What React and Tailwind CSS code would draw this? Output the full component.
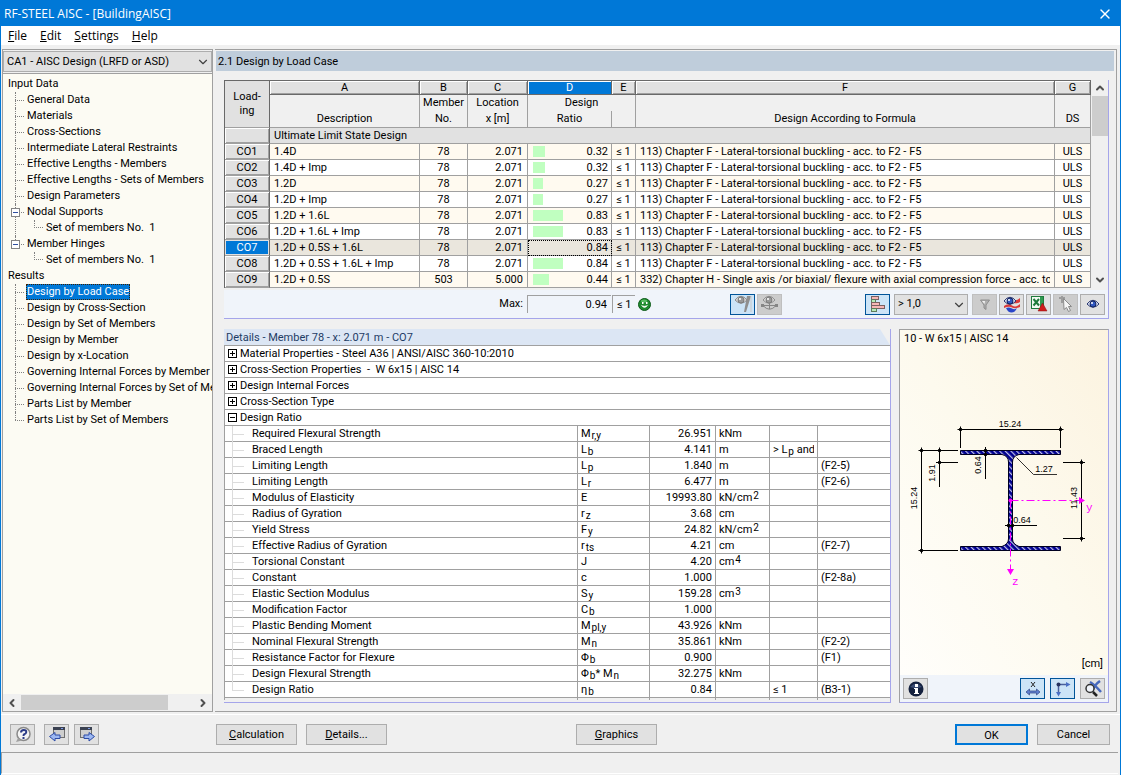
import React from 'react';
import { ChevronDown, ChevronLeft, ChevronRight, ChevronUp, X } from 'lucide-react';

const menu = ['File', 'Edit', 'Settings', 'Help'];

const inputData = [
  { label: 'General Data' },
  { label: 'Materials' },
  { label: 'Cross-Sections' },
  { label: 'Intermediate Lateral Restraints' },
  { label: 'Effective Lengths - Members' },
  { label: 'Effective Lengths - Sets of Members' },
  { label: 'Design Parameters' },
  { label: 'Nodal Supports', child: 'Set of members No.  1' },
  { label: 'Member Hinges', child: 'Set of members No.  1' },
];

const results = [
  { label: 'Design by Load Case', active: true },
  { label: 'Design by Cross-Section' },
  { label: 'Design by Set of Members' },
  { label: 'Design by Member' },
  { label: 'Design by x-Location' },
  { label: 'Governing Internal Forces by Member' },
  { label: 'Governing Internal Forces by Set of Members' },
  { label: 'Parts List by Member' },
  { label: 'Parts List by Set of Members' },
];

const torsional = '113) Chapter F - Lateral-torsional buckling - acc. to F2 - F5';
const flexure = '332) Chapter H - Single axis /or biaxial/ flexure with axial compression force - acc. to H1';

const loadCases = [
  { id: 'CO1', description: '1.4D', member: '78', x: '2.071', ratio: '0.32', formula: torsional },
  { id: 'CO2', description: '1.4D + Imp', member: '78', x: '2.071', ratio: '0.32', formula: torsional },
  { id: 'CO3', description: '1.2D', member: '78', x: '2.071', ratio: '0.27', formula: torsional },
  { id: 'CO4', description: '1.2D + Imp', member: '78', x: '2.071', ratio: '0.27', formula: torsional },
  { id: 'CO5', description: '1.2D + 1.6L', member: '78', x: '2.071', ratio: '0.83', formula: torsional },
  { id: 'CO6', description: '1.2D + 1.6L + Imp', member: '78', x: '2.071', ratio: '0.83', formula: torsional },
  { id: 'CO7', description: '1.2D + 0.5S + 1.6L', member: '78', x: '2.071', ratio: '0.84', formula: torsional, selected: true },
  { id: 'CO8', description: '1.2D + 0.5S + 1.6L + Imp', member: '78', x: '2.071', ratio: '0.84', formula: torsional },
  { id: 'CO9', description: '1.2D + 0.5S', member: '503', x: '5.000', ratio: '0.44', formula: flexure },
];

const groups = [
  'Material Properties - Steel A36 | ANSI/AISC 360-10:2010',
  'Cross-Section Properties  -  W 6x15 | AISC 14',
  'Design Internal Forces',
  'Cross-Section Type',
];

const Sub = ({ children }) => <span className="relative top-[2px] pl-px text-[10px]">{children}</span>;
const Sup = ({ children }) => <span className="relative -top-[2px] pl-px text-[10px]">{children}</span>;

const details = [
  { name: 'Required Flexural Strength', symbol: <>M<Sub>r,y</Sub></>, value: '26.951', unit: 'kNm' },
  { name: 'Braced Length', symbol: <>L<Sub>b</Sub></>, value: '4.141', unit: 'm', note: <>&gt; L<Sub>p</Sub> and</> },
  { name: 'Limiting Length', symbol: <>L<Sub>p</Sub></>, value: '1.840', unit: 'm', ref: '(F2-5)' },
  { name: 'Limiting Length', symbol: <>L<Sub>r</Sub></>, value: '6.477', unit: 'm', ref: '(F2-6)' },
  { name: 'Modulus of Elasticity', symbol: 'E', value: '19993.80', unit: <>kN/cm<Sup>2</Sup></> },
  { name: 'Radius of Gyration', symbol: <>r<Sub>z</Sub></>, value: '3.68', unit: 'cm' },
  { name: 'Yield Stress', symbol: <>F<Sub>y</Sub></>, value: '24.82', unit: <>kN/cm<Sup>2</Sup></> },
  { name: 'Effective Radius of Gyration', symbol: <>r<Sub>ts</Sub></>, value: '4.21', unit: 'cm', ref: '(F2-7)' },
  { name: 'Torsional Constant', symbol: 'J', value: '4.20', unit: <>cm<Sup>4</Sup></> },
  { name: 'Constant', symbol: 'c', value: '1.000', ref: '(F2-8a)' },
  { name: 'Elastic Section Modulus', symbol: <>S<Sub>y</Sub></>, value: '159.28', unit: <>cm<Sup>3</Sup></> },
  { name: 'Modification Factor', symbol: <>C<Sub>b</Sub></>, value: '1.000' },
  { name: 'Plastic Bending Moment', symbol: <>M<Sub>pl,y</Sub></>, value: '43.926', unit: 'kNm' },
  { name: 'Nominal Flexural Strength', symbol: <>M<Sub>n</Sub></>, value: '35.861', unit: 'kNm', ref: '(F2-2)' },
  { name: 'Resistance Factor for Flexure', symbol: <>Φ<Sub>b</Sub></>, value: '0.900', ref: '(F1)' },
  { name: 'Design Flexural Strength', symbol: <>Φ<Sub>b</Sub>* M<Sub>n</Sub></>, value: '32.275', unit: 'kNm' },
  { name: 'Design Ratio', symbol: <>η<Sub>b</Sub></>, value: '0.84', note: '≤ 1', ref: '(B3-1)' },
];

/* ---------- Icons ---------- */

const Icon = ({ children }) => (
  <svg width="18" height="18" viewBox="0 0 18 18" aria-hidden="true">{children}</svg>
);

const EyeShape = ({ x, y, gray }) => (
  <g transform={`translate(${x} ${y})`}>
    <path d="M0 4 Q6 -3.500 12 4 Q6 10.500 0 4Z" fill={gray ? '#dcdcdc' : '#e6ecfa'} stroke={gray ? '#8c8c8c' : '#26336e'} />
    <circle cx="6" cy="4" r="3" fill={gray ? '#9a9a9a' : '#3057c0'} stroke={gray ? '#7c7c7c' : '#152560'} />
    <circle cx="5" cy="3" r="1" fill="#fff" />
  </g>
);

const HelpIcon = () => (
  <Icon>
    <circle cx="9.500" cy="8" r="6.500" fill="#f4f4f4" stroke="#8a8a8a" strokeWidth="1.500" />
    <path d="M4 12 L2 16 L8 14.500Z" fill="#a0a0a0" />
    <path d="M7 6.500 Q7 4 9.800 4 Q12.500 4 12.200 6.300 Q12 7.600 10.300 8.200 Q9.500 8.600 9.500 10" fill="none" stroke="#2c3c88" strokeWidth="2" />
    <rect x="8.500" y="11" width="2" height="2" fill="#2c3c88" />
  </Icon>
);

const WindowArrowIcon = ({ next }) => (
  <Icon>
    <rect x={next ? 2.5 : 5.5} y="1.500" width="11" height="10" fill="#cfcfcf" stroke="#707070" />
    <rect x={next ? 2 : 5} y="1" width="12" height="3" fill="#3b4252" />
    <rect x={next ? 10 : 13} y="2" width="2" height="1" fill="#7f9be8" />
    {next
      ? <path d="M6 9H11V6.500L16.500 10.500L11 15V12.500H6Z" fill="#9db8f2" stroke="#2c4ba6" />
      : <path d="M12 9H7V6.500L1.500 10.500L7 15V12.500H12Z" fill="#9db8f2" stroke="#2c4ba6" />}
  </Icon>
);

const MemberEyeIcon = () => (
  <Icon>
    <EyeShape x={1} y={1} gray />
    <path d="M13 1H17L12 17H10Z" fill="#8f8f8f" />
    <path d="M17 1V17" stroke="#c8c8c8" />
  </Icon>
);

const SupportEyeIcon = () => (
  <Icon>
    <EyeShape x={2} y={1} gray />
    <path d="M1 10.500H16M2 10.500Q8.500 18 15 10.500M8.500 8V14" fill="none" stroke="#858585" />
    <rect x="0" y="9" width="3" height="3" fill="#858585" />
    <rect x="14" y="9" width="3" height="3" fill="#858585" />
  </Icon>
);

const BarsIcon = () => (
  <Icon>
    <path d="M2.500 1V17" stroke="#777" />
    <rect x="2.500" y="1.500" width="7" height="3" fill="#f6b5b5" stroke="#7a6060" />
    <rect x="2.500" y="4.500" width="4" height="3" fill="#b7eab7" stroke="#5d7a5d" />
    <rect x="2.500" y="7.500" width="8" height="3" fill="#f6b5b5" stroke="#7a6060" />
    <rect x="2.500" y="10.500" width="13" height="3" fill="#f6b5b5" stroke="#7a6060" />
    <rect x="2.500" y="13.500" width="5" height="3" fill="#b7eab7" stroke="#5d7a5d" />
  </Icon>
);

const FilterIcon = () => (
  <Icon>
    <path d="M4.500 5H13.500L10 10V14.500L8 13V10Z" fill="#b0b0b0" stroke="#8e8e8e" />
    <path d="M6 6H9L8.500 9Z" fill="#f2f2f2" />
  </Icon>
);

const ColorEyeIcon = () => (
  <Icon>
    <path d="M11 5Q14 6 17 3V7Q14 9 10 8Z" fill="#d83a3a" />
    <path d="M1 11Q5 8 9 10.500T17 9V12Q12 14 9 12.500T1 13Z" fill="#d83a3a" />
    <path d="M3 13Q6 12 9 13.500T14 13Q12 17.500 8.500 17.500T3 13Z" fill="#2a46c8" />
    <EyeShape x={1} y={2} />
  </Icon>
);

const ExcelIcon = () => (
  <Icon>
    <rect x="1.500" y="1.500" width="12" height="12" fill="#f3faf3" stroke="#1f7a3c" />
    <rect x="10" y="2" width="3" height="11" fill="#2f9a50" />
    <path d="M3.500 4L9 10.500M9 4L3.500 10.500" stroke="#1f7a3c" strokeWidth="2" />
    <path d="M12.500 8L17 16H8Z" fill="#d01c1c" stroke="#8a1010" strokeWidth=".5" />
  </Icon>
);

const PickIcon = () => (
  <Icon>
    <path d="M2 3H8M5 1V8" stroke="#9c9c9c" strokeWidth="2" />
    <path d="M6.500 3.500L14.500 11.500H11.500L13.500 15.500L11.500 16.500L9.500 12.500L7 14.500Z" fill="#f6f6f6" stroke="#8a8a8a" />
  </Icon>
);

const EyeIcon = () => <Icon><EyeShape x={3} y={5} /></Icon>;

const InfoIcon = () => (
  <Icon>
    <circle cx="9" cy="9" r="7.500" fill="#14213f" />
    <path d="M3 7Q9 0 15 7Q9 9 3 7Z" fill="#536796" opacity=".6" />
    <rect x="8" y="4" width="3" height="3" fill="#fff" />
    <path d="M7 8H11V13H12V14H7V13H8V9H7Z" fill="#fff" />
  </Icon>
);

const DimensionIcon = () => (
  <Icon>
    <path d="M7 2L11 7M11 2L7 7" stroke="#222" />
    <path d="M2 12L5.500 9V11H12.500V9L16 12L12.500 15V13H5.500V15Z" fill="#5d7fd0" stroke="#3c528e" strokeWidth=".8" />
  </Icon>
);

const AxesIcon = () => (
  <Icon>
    <path d="M4.500 14V4.500H13" fill="none" stroke="#4a5f9c" strokeWidth="1.500" />
    <path d="M12 2L16.500 4.500L12 7ZM2 12L4.500 16.500L7 12Z" fill="#4a6fc4" />
    <circle cx="4.500" cy="4.500" r="2" fill="#26335f" />
  </Icon>
);

const ZoomIcon = () => (
  <Icon>
    <path d="M6 2Q10 4 17 12M16 1Q10 5 8 12" fill="none" stroke="#4668bd" strokeWidth="2.500" />
    <circle cx="6" cy="8.500" r="4" fill="#f0f4fa" stroke="#333" strokeWidth="1.500" />
    <path d="M9 12L13 16" stroke="#222" strokeWidth="2.500" />
  </Icon>
);

const Smiley = () => (
  <svg width="13" height="13" viewBox="0 0 13 13" role="img" aria-label="Passed">
    <circle cx="6.500" cy="6.500" r="6" fill="#1f8a2f" stroke="#0d5a18" />
    <ellipse cx="6" cy="3" rx="3" ry="1.500" fill="#7fdc84" opacity=".6" />
    <rect x="4" y="4" width="1.500" height="2" fill="#fff" />
    <rect x="8" y="4" width="1.500" height="2" fill="#fff" />
    <path d="M3.500 7.500Q6.500 11.500 9.500 7.500Q6.500 9 3.500 7.500Z" fill="#fff" stroke="#fff" strokeWidth=".5" />
  </svg>
);

/* ---------- Controls ---------- */

const tones = {
  normal: 'border-[#adadad] bg-[#e1e1e1]',
  active: 'border-[#005499] bg-[#cce4f7]',
  disabled: 'border-[#bfbfbf] bg-[#cccccc]',
};

const IconButton = ({ label, tone = 'normal', children }) => (
  <button
    type="button"
    aria-label={label}
    disabled={tone === 'disabled'}
    className={`flex h-[21px] w-[25px] shrink-0 items-center justify-center border ${tones[tone]}`}
  >
    {children}
  </button>
);

const TextButton = ({ children, className = 'w-[81px] border border-[#adadad]' }) => (
  <button type="button" className={`h-[21px] bg-[#e1e1e1] text-center leading-[19px] ${className}`}>
    {children}
  </button>
);

const Select = ({ label, value, className }) => (
  <div className={`relative h-[21px] ${className}`}>
    <select aria-label={label} className="h-full w-full appearance-none border border-[#adadad] bg-[#e1e1e1] px-[3px] pt-px">
      <option>{value}</option>
    </select>
    <ChevronDown className="pointer-events-none absolute right-[2px] top-1 h-[14px] w-[14px] text-[#404040]" strokeWidth={2} />
  </div>
);

/* ---------- Navigator ---------- */

const TreeItem = ({ item, last }) => (
  <li className="relative pl-[19px]">
    <span className={`absolute left-[8px] top-0 border-l border-dotted border-[#808080] ${last ? 'h-2' : 'h-full'}`} />
    <span className="absolute left-[8px] top-2 w-[9px] border-t border-dotted border-[#808080]" />
    {item.child && (
      <span className="absolute left-1 top-1 flex h-[9px] w-[9px] items-center justify-center border border-[#848484] bg-white">
        <span className="h-px w-[5px] bg-[#3050a0]" />
      </span>
    )}
    <a href="#" className={`inline-block h-4 px-px leading-4 ${item.active ? 'bg-[#0078d7] text-white outline-1 -outline-offset-1 outline-dotted outline-[#402000]' : ''}`}>
      {item.label}
    </a>
    {item.child && (
      <ul>
        <li className="relative h-4 pl-[19px]">
          <span className="absolute left-[8px] top-0 h-2 w-[9px] border-b border-l border-dotted border-[#808080]" />
          <a href="#" className="whitespace-pre px-px">{item.child}</a>
        </li>
      </ul>
    )}
  </li>
);

const TreeSection = ({ title, items }) => (
  <div>
    <div className="pl-[5px]">{title}</div>
    <ul className="pl-1">
      {items.map((item, i) => (
        <TreeItem key={item.label} item={item} last={i === items.length - 1} />
      ))}
    </ul>
  </div>
);

const Navigator = () => (
  <nav className="flex w-[211px] shrink-0 flex-col border border-[#a0a0a0] bg-[#fcfbf3]">
    <div className="border-b border-[#a0a0a0] bg-[#f0f0f0] pb-px pt-px">
      <Select label="Design case" value="CA1 - AISC Design (LRFD or ASD)" className="w-full" />
    </div>
    <div className="flex-1 overflow-hidden whitespace-nowrap pt-[2px] leading-4">
      <TreeSection title="Input Data" items={inputData} />
      <TreeSection title="Results" items={results} />
    </div>
    <div className="flex h-[17px] items-center bg-[#f0f0f0] text-[#505050]">
      <button type="button" aria-label="Scroll left" className="px-[3px]"><ChevronLeft className="h-3 w-3" strokeWidth={4} /></button>
      <div className="flex h-[15px] flex-1">
        <div className="w-[85%] bg-[#cdcdcd]" />
      </div>
      <button type="button" aria-label="Scroll right" className="px-[3px]"><ChevronRight className="h-3 w-3" strokeWidth={4} /></button>
    </div>
  </nav>
);

/* ---------- Load case grid ---------- */

const letterCell = 'h-[15px] border-y border-r border-[#696969] bg-[#e1e1e1] p-0 leading-[13px] shadow-[inset_1px_1px_0_#fff,inset_-1px_-1px_0_#a0a0a0]';
const headCell = 'border-b border-r border-[#a0a0a0] bg-[#f0f0f0] p-0';
const bodyCell = 'h-4 overflow-hidden whitespace-nowrap border-b border-r border-[#a0a0a0] py-0 leading-[15px]';
const rowHead = 'h-4 border-b border-r border-b-[#a0a0a0] border-r-[#696969] p-0 leading-[13px]';
const raised = 'bg-[#e1e1e1] shadow-[inset_1px_1px_0_#fff,inset_-1px_-1px_0_#a0a0a0]';

const LoadCaseTable = () => (
  <table className="w-full table-fixed border-separate border-spacing-0 border-l border-[#696969]">
    <colgroup>
      <col className="w-[45px]" />
      <col className="w-[150px]" />
      <col className="w-[48px]" />
      <col className="w-[60px]" />
      <col className="w-[84px]" />
      <col className="w-[24px]" />
      <col />
      <col className="w-[36px]" />
    </colgroup>
    <thead className="[&_th]:font-normal">
      <tr>
        <th rowSpan={3} className="border-y border-r border-[#696969] border-b-[#a0a0a0] bg-[#e1e1e1] p-0 leading-[14px]">Load-<br />ing</th>
        <th className={letterCell}>A</th>
        <th className={letterCell}>B</th>
        <th className={letterCell}>C</th>
        <th className="h-[15px] border-y border-r border-[#696969] bg-[#0078d7] p-0 leading-[13px] text-white shadow-[inset_1px_1px_0_#fff]">D</th>
        <th className={letterCell}>E</th>
        <th className={letterCell}>F</th>
        <th className={letterCell}>G</th>
      </tr>
      <tr className="h-4 leading-4">
        <th rowSpan={2} className={`${headCell} align-bottom`}>Description</th>
        <th rowSpan={2} className={`${headCell} align-bottom`}>Member<br />No.</th>
        <th rowSpan={2} className={`${headCell} align-bottom`}>Location<br />x [m]</th>
        <th colSpan={2} className="h-4 border-r border-[#a0a0a0] bg-[#f0f0f0] p-0">Design</th>
        <th rowSpan={2} className={`${headCell} align-bottom`}>Design According to Formula</th>
        <th rowSpan={2} className={`${headCell} align-bottom`}>DS</th>
      </tr>
      <tr className="leading-4">
        <th className={`${headCell} h-[17px]`}>Ratio</th>
        <th className={headCell} />
      </tr>
    </thead>
    <tbody>
      <tr>
        <th className={`${rowHead} ${raised}`} />
        <td colSpan={7} className={`${bodyCell} bg-[#e1e1e1] px-1`}>Ultimate Limit State Design</td>
      </tr>
      {loadCases.map((row, i) => (
        <tr key={row.id} className={row.selected ? 'bg-[#eae6dd]' : i % 2 ? 'bg-white' : 'bg-[#fffaf0]'}>
          <th className={`${rowHead} font-normal ${row.selected ? 'bg-[#0078d7] text-white shadow-[inset_0_0_0_1px_#e1e1e1]' : raised}`}>{row.id}</th>
          <td className={`${bodyCell} px-1`}>{row.description}</td>
          <td className={`${bodyCell} text-center`}>{row.member}</td>
          <td className={`${bodyCell} px-1 text-right`}>{row.x}</td>
          <td className={`${bodyCell} pl-[5px] pr-[3px] ${row.selected ? 'outline-1 -outline-offset-1 outline-dotted outline-black' : ''}`}>
            <div className="flex items-center justify-between">
              <span
                className={`h-[11px] ${row.selected ? '' : 'bg-[#c0ffc0]'}`}
                style={{ width: Math.round(row.ratio * 36) }}
              />
              {row.ratio}
            </div>
          </td>
          <td className={`${bodyCell} text-center`}>≤ 1</td>
          <td className={`${bodyCell} px-1`}>
            <div className="overflow-hidden">{row.formula}</div>
          </td>
          <td className={`${bodyCell} text-center`}>ULS</td>
        </tr>
      ))}
    </tbody>
  </table>
);

const GridToolbar = () => (
  <div className="mt-[2px] flex h-[28px] items-center bg-[#f0f4fa] pr-[3px]">
    <div className="flex w-[506px] items-center">
      <label htmlFor="max" className="w-[303px] pr-1 text-right">Max:</label>
      <input id="max" readOnly value="0.94" className="h-[18px] w-[84px] border-l border-t border-[#a0a0a0] bg-[#f0f4fa] px-1 text-right" />
      <span className="ml-px h-[18px] w-[23px] border-l border-t border-[#a0a0a0] pl-1 leading-[18px]">≤ 1</span>
      <span className="ml-[3px]"><Smiley /></span>
    </div>
    <div className="flex flex-1 gap-[2px]">
      <IconButton label="Show member" tone="active"><MemberEyeIcon /></IconButton>
      <IconButton label="Show support" tone="disabled"><SupportEyeIcon /></IconButton>
    </div>
    <div className="flex gap-[2px]">
      <IconButton label="Ratio bars" tone="active"><BarsIcon /></IconButton>
      <Select label="Ratio filter" value="> 1,0" className="mx-[2px] w-[74px]" />
      <IconButton label="Filter" tone="disabled"><FilterIcon /></IconButton>
      <IconButton label="Colour scale"><ColorEyeIcon /></IconButton>
      <IconButton label="Export to Excel"><ExcelIcon /></IconButton>
      <IconButton label="Pick" tone="disabled"><PickIcon /></IconButton>
      <IconButton label="View"><EyeIcon /></IconButton>
    </div>
  </div>
);

const LoadCasePanel = () => (
  <section className="border-b border-r border-[#a5a5ea]">
    <div className="flex">
      <div className="min-w-0 flex-1"><LoadCaseTable /></div>
      <div className="ml-px flex w-4 flex-col items-center text-[#505050]">
        <button type="button" aria-label="Scroll up" className="flex h-4 items-center"><ChevronUp className="h-3 w-3" strokeWidth={4} /></button>
        <div className="h-10 w-full bg-[#cdcdcd]" />
        <div className="flex-1" />
        <button type="button" aria-label="Scroll down" className="flex h-4 items-center"><ChevronDown className="h-3 w-3" strokeWidth={4} /></button>
      </div>
    </div>
    <GridToolbar />
  </section>
);

/* ---------- Details ---------- */

const Toggle = ({ open }) => (
  <svg width="9" height="9" viewBox="0 0 9 9" className="shrink-0" aria-hidden="true">
    <rect x=".5" y=".5" width="8" height="8" fill="#fff" stroke="#000" />
    <path d={open ? 'M2 4.500H7' : 'M2 4.500H7M4.500 2V7'} stroke="#000" />
  </svg>
);

const detailCell = 'h-4 whitespace-nowrap border-b border-r border-[#a0a0a0] px-[3px] py-0 leading-[15px]';
const lastCell = 'h-4 whitespace-nowrap border-b border-[#a0a0a0] px-[3px] py-0 leading-[15px]';

const GroupRow = ({ title, open }) => (
  <tr>
    <td colSpan={6} className={lastCell}>
      <div className="flex items-center gap-[3px]">
        <Toggle open={open} />
        <span className="whitespace-pre">{title}</span>
      </div>
    </td>
  </tr>
);

const DetailsPanel = () => (
  <section className="min-w-0 flex-1 border-b border-r border-[#a5a5ea]">
    <h2 className="h-4 bg-[#dce6f4] px-[2px] leading-[17px] text-[#1e3c64] [clip-path:polygon(0_0,calc(100%-10px)_0,100%_100%,0_100%)]">
      Details - Member 78 - x: 2.071 m - CO7
    </h2>
    <table className="w-full table-fixed border-separate border-spacing-0 border-l border-t border-[#a0a0a0] bg-white">
      <colgroup>
        <col />
        <col className="w-[72px]" />
        <col className="w-[66px]" />
        <col className="w-[54px]" />
        <col className="w-[48px]" />
        <col className="w-[72px]" />
      </colgroup>
      <tbody>
        {groups.map((title) => <GroupRow key={title} title={title} />)}
        <GroupRow title="Design Ratio" open />
        {details.map((row, i) => (
          <tr key={i}>
            <td className={`${detailCell} relative`}>
              <span className={`absolute left-[7px] top-0 border-l border-[#dcdcdc] ${i === details.length - 1 ? 'h-2' : 'h-4'}`} />
              <span className="absolute left-[7px] top-2 w-3 border-t border-[#dcdcdc]" />
              <span className="pl-6">{row.name}</span>
            </td>
            <td className={detailCell}>{row.symbol}</td>
            <td className={`${detailCell} text-right`}>{row.value}</td>
            <td className={detailCell}>{row.unit}</td>
            <td className={detailCell}><div className="h-[15px] overflow-hidden">{row.note}</div></td>
            <td className={lastCell}>{row.ref}</td>
          </tr>
        ))}
        <tr className="bg-[#f0f0f0]">
          <td className="h-[2px] border-r border-[#a0a0a0] p-0" />
          <td className="border-r border-[#a0a0a0] p-0" />
          <td className="border-r border-[#a0a0a0] p-0" />
          <td className="border-r border-[#a0a0a0] p-0" />
          <td className="border-r border-[#a0a0a0] p-0" />
          <td className="p-0" />
        </tr>
      </tbody>
    </table>
    <div className="h-[2px]" />
  </section>
);

/* ---------- Section drawing ---------- */

const Dot = ({ x, y }) => (
  <path d={`M${x - 3} ${y}H${x + 3}M${x} ${y - 3}V${y + 3}M${x - 1} ${y - 1}h2v2h-2z`} fill="#000" stroke="#000" />
);

const SectionDrawing = () => (
  <svg viewBox="900 409 208 180" className="w-full font-['Liberation_Sans',sans-serif] text-[9px]" role="img" aria-label="W 6x15 cross-section">
    <defs>
      <pattern id="hatch" width="4" height="4" patternUnits="userSpaceOnUse" patternTransform="rotate(-45)">
        <rect width="4" height="4" fill="#000090" />
        <rect width="1.200" height="4" fill="#c0c0e8" />
      </pattern>
    </defs>
    <path
      d="M960.500 449.500H1060.500V453.500H1019Q1012.500 455 1012.500 461V538Q1012.500 543 1019 545.500H1060.500V549.500H960.500V545.500H1002Q1008.500 543 1008.500 538V461Q1008.500 455 1002 453.500H960.500Z"
      fill="url(#hatch)"
      stroke="#000020"
    />
    <g stroke="#000" fill="none">
      <path d="M958 428.500H1063M960.500 427V447M1060.500 427V447" />
      <path d="M921.500 447V552M919 449.500H958M919 549.500H958" />
      <path d="M939.500 447V486M936 461.500H958" />
      <path d="M985.500 446V478" />
      <path d="M1016.500 456.500L1033.500 473.500H1057" strokeWidth=".8" />
      <path d="M1081.500 461V538M1063 461.500H1085M1063 537.500H1085" />
      <path d="M1005 524.500H1037" />
    </g>
    <Dot x={960.5} y={428.5} />
    <Dot x={1060.5} y={428.5} />
    <Dot x={921.5} y={449.5} />
    <Dot x={921.5} y={549.5} />
    <Dot x={939.5} y={449.5} />
    <Dot x={939.5} y={461.5} />
    <Dot x={985.5} y={449.5} />
    <Dot x={985.5} y={453.5} />
    <Dot x={1081.5} y={461.5} />
    <Dot x={1081.5} y={537.5} />
    <Dot x={1008.5} y={524.5} />
    <Dot x={1012.5} y={524.5} />
    <g stroke="#f0f" strokeDasharray="8 3 2 3">
      <path d="M1010.500 499.500H1079" />
      <path d="M1010.500 499.500V568" />
    </g>
    <circle cx="1010.500" cy="499.500" r="2" fill="#f0f" />
    <path d="M1079 496L1085 499.500L1079 503ZM1007 568H1014L1010.500 574Z" fill="#f0f" />
    <g textAnchor="middle">
      <text x="1010" y="426">15.24</text>
      <text x="1044" y="471">1.27</text>
      <text x="1022" y="522">0.64</text>
      <text transform="translate(917 497) rotate(-90)">15.24</text>
      <text transform="translate(935 472) rotate(-90)">1.91</text>
      <text transform="translate(981 464) rotate(-90)">0.64</text>
      <text transform="translate(1077 497) rotate(-90)">11.43</text>
    </g>
    <g fill="#f0f" className="font-['Liberation_Mono',monospace] text-[11px]">
      <text x="1086" y="510">y</text>
      <text x="1012" y="584">z</text>
    </g>
  </svg>
);

const SectionPanel = () => (
  <section className="flex w-[210px] shrink-0 flex-col border border-[#a5a5ea] border-l-[#a0a0a0] border-t-[#a0a0a0]">
    <div className="flex flex-1 flex-col bg-linear-to-bl from-[#fcf3e0] via-[#fdfaee] to-[#fffefb]">
      <h2 className="px-1 leading-[17px]">10 - W 6x15 | AISC 14</h2>
      <div className="flex flex-1 items-center"><SectionDrawing /></div>
      <div className="px-[5px] text-right leading-[22px]">[cm]</div>
    </div>
    <div className="flex h-[27px] items-center gap-[5px] bg-[#f0f4fa] px-[3px]">
      <IconButton label="Info"><InfoIcon /></IconButton>
      <span className="flex-1" />
      <IconButton label="Dimensions" tone="active"><DimensionIcon /></IconButton>
      <IconButton label="Axes" tone="active"><AxesIcon /></IconButton>
      <IconButton label="Zoom all"><ZoomIcon /></IconButton>
    </div>
  </section>
);

const App = () => (
  <div className="flex min-h-screen flex-col border border-[#0078d7] bg-[#f0f0f0] font-[Roboto,sans-serif] text-[11px] text-black">
    <header className="flex h-[25px] items-center justify-between bg-[#0078d7] pl-[3px] pr-[7px] font-['Open_Sans',sans-serif] text-xs text-white">
      <h1>RF-STEEL AISC - [BuildingAISC]</h1>
      <button type="button" aria-label="Close"><X className="h-4 w-4" strokeWidth={2} /></button>
    </header>
    <div className="flex h-[19px] items-center gap-[13px] bg-white px-[7px] font-['Open_Sans',sans-serif] text-xs">
      {menu.map((item) => (
        <button type="button" key={item}>
          <span className="underline">{item[0]}</span>{item.slice(1)}
        </button>
      ))}
    </div>

    <main className="flex flex-1 gap-[2px] px-px pb-[2px] pr-[3px] pt-1">
      <Navigator />
      <div className="min-w-0 flex-1 border-b border-r border-t border-[#a0a0a0] pl-px pr-[2px] pt-px">
        <h2 className="h-5 bg-[#bfcddb] px-[2px] leading-[22px]">2.1 Design by Load Case</h2>
        <div className="flex flex-col gap-[10px] pb-2 pl-2 pr-[5px] pt-[9px]">
          <LoadCasePanel />
          <div className="flex gap-2">
            <DetailsPanel />
            <SectionPanel />
          </div>
        </div>
      </div>
    </main>

    <div className="flex items-center border-t border-white pb-[7px] pl-[9px] pr-[10px] pt-[9px]">
      <div className="flex w-[206px]">
        <IconButton label="Help"><HelpIcon /></IconButton>
        <span className="ml-[9px] flex gap-[5px]">
          <IconButton label="Previous table"><WindowArrowIcon /></IconButton>
          <IconButton label="Next table"><WindowArrowIcon next /></IconButton>
        </span>
      </div>
      <div className="flex gap-[9px]">
        <TextButton><span className="underline">C</span>alculation</TextButton>
        <TextButton><span className="underline">D</span>etails...</TextButton>
      </div>
      <div className="ml-[189px]">
        <TextButton><span className="underline">G</span>raphics</TextButton>
      </div>
      <div className="ml-auto flex gap-[9px]">
        <TextButton className="w-[73px] border-2 border-[#0078d7]">OK</TextButton>
        <TextButton className="w-[73px] border border-[#adadad]">Cancel</TextButton>
      </div>
    </div>
    <footer className="mb-[2px] mr-[2px] h-[22px] border-b border-l border-t border-[#a0a0a0] border-b-white" />
  </div>
);

export default App;
